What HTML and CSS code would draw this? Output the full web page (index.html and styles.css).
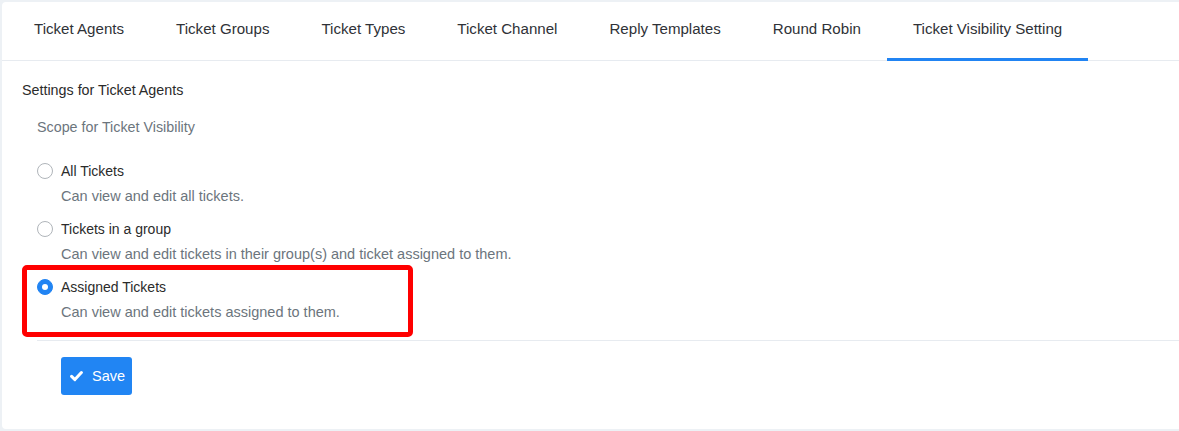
FILE: index.html
```html
<!DOCTYPE html>
<html lang="en">
<head>
    <meta charset="UTF-8">
    <meta name="viewport" content="width=device-width, initial-scale=1.0">
    <title>Ticket Settings</title>
    <link rel="stylesheet" href="styles.css">
</head>
<body>

    <div class="card">
        <ul class="tabs">
            <li class="tab">Ticket Agents</li>
            <li class="tab">Ticket Groups</li>
            <li class="tab">Ticket Types</li>
            <li class="tab">Ticket Channel</li>
            <li class="tab">Reply Templates</li>
            <li class="tab">Round Robin</li>
            <li class="tab active">Ticket Visibility Setting</li>
        </ul>

        <div class="card-body">
            <h4 class="section-title">Settings for Ticket Agents</h4>

            <div class="form-group">
                <p class="group-label">Scope for Ticket Visibility</p>

                <div class="option">
                    <label class="option-label"><span class="radio"></span>All Tickets</label>
                    <p class="option-help">Can view and edit all tickets.</p>
                </div>

                <div class="option">
                    <label class="option-label"><span class="radio"></span>Tickets in a group</label>
                    <p class="option-help">Can view and edit tickets in their group(s) and ticket assigned to them.</p>
                </div>

                <div class="option highlighted">
                    <label class="option-label"><span class="radio checked"></span>Assigned Tickets</label>
                    <p class="option-help">Can view and edit tickets assigned to them.</p>
                    <div class="highlight-box"></div>
                </div>
            </div>

            <div class="form-actions">
                <button class="save-btn">
                    <svg class="check-icon" width="13" height="12" viewBox="0 0 13 12">
                        <path d="M1.6 6.4 L4.9 9.6 L11.4 2.6" fill="none" stroke="#fff" stroke-width="3" stroke-linecap="round" stroke-linejoin="round"/>
                    </svg>
                    Save
                </button>
            </div>
        </div>
    </div>

</body>
</html>
```

FILE: styles.css
```css
* {
    margin: 0;
    padding: 0;
    box-sizing: border-box;
    font-family: "Liberation Sans", Arial, sans-serif;
}

body {
    background-color: #edf1f5;
    color: #333;
    padding: 2px 0 2px 2px;
    height: 431px;
    overflow: hidden;
}

.card {
    background-color: white;
    border-radius: 4px 0 0 4px;
    height: 427px;
}

.tabs {
    list-style: none;
    display: flex;
    padding-left: 6px;
    border-bottom: 1px solid #e7ebf0;
    height: 59px;
}

.tab {
    font-size: 15.1px;
    color: #2f3237;
    padding: 0 26px;
    line-height: 54px;
    border-bottom: 3px solid transparent;
    height: 59px;
    white-space: nowrap;
}

.tab.active {
    border-bottom-color: #2184f3;
}

.card-body {
    padding: 19px 0 0 20px;
}

.section-title {
    font-size: 14.3px;
    font-weight: normal;
    line-height: 20px;
    color: #2b2b2b;
}

.form-group {
    padding-left: 15px;
    margin-top: 17px;
}

.group-label {
    font-size: 14.3px;
    line-height: 20px;
    color: #6c757d;
    margin-bottom: 24px;
}

.option {
    margin-bottom: 13px;
}

.option:last-child {
    margin-bottom: 0;
}

.option-label {
    display: flex;
    align-items: center;
    gap: 8px;
    font-size: 14px;
    line-height: 20px;
    color: #2b2b2b;
}

.radio {
    width: 16px;
    height: 16px;
    border-radius: 50%;
    border: 1px solid #b0b5ba;
    background-color: white;
    display: inline-block;
    flex-shrink: 0;
    margin-top: -1px;
}

.radio.checked {
    background-color: #2184f3;
    border-color: #2184f3;
    position: relative;
}

.radio.checked::after {
    content: "";
    position: absolute;
    left: 4px;
    top: 4px;
    width: 6px;
    height: 6px;
    border-radius: 50%;
    background-color: white;
}

.option-help {
    font-size: 14.5px;
    line-height: 20px;
    color: #6c757d;
    margin-top: 5px;
    padding-left: 24px;
}

.highlighted {
    position: relative;
}

.highlight-box {
    position: absolute;
    left: -15px;
    top: -12px;
    width: 391px;
    height: 72px;
    border: 5px solid #ff0000;
    border-radius: 5px;
}

.form-actions {
    margin-left: 15px;
    margin-top: 18px;
    border-top: 1px solid #e7ebf0;
    padding: 16px 0 0 24px;
}

.save-btn {
    display: flex;
    align-items: center;
    gap: 9px;
    background-color: #2185f3;
    color: white;
    border: none;
    border-radius: 3px;
    width: 71px;
    height: 38px;
    padding: 0 0 0 9px;
    font-size: 14.5px;
    cursor: pointer;
}

.check-icon {
    flex-shrink: 0;
}
```
